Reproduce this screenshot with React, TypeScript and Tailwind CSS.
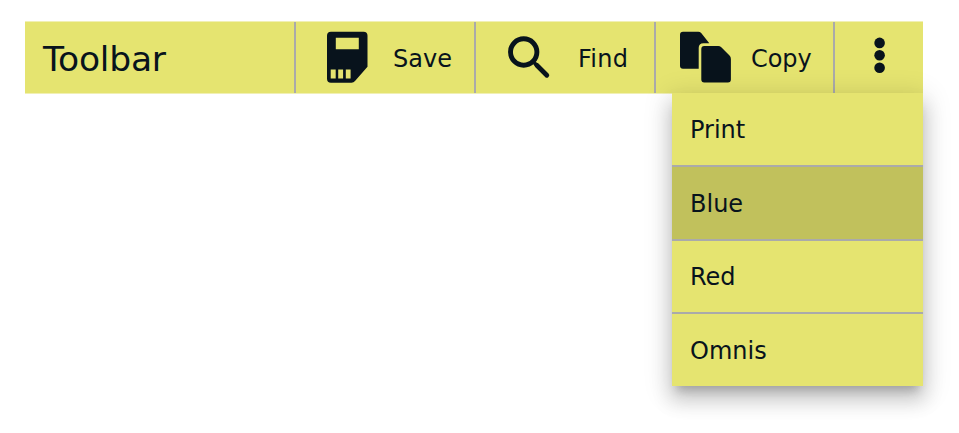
import type { ReactNode } from 'react';

const ink = '#08131c';

function SaveIcon() {
  return (
    <svg className="ml-[30px] h-[54px] w-[44px] shrink-0" viewBox="326 30.5 44 54" fill={ink}>
      <path
        fillRule="evenodd"
        d="M331 31.2H363.5a4 4 0 0 1 4 4V66.2L355 80.6Q353.6 82.2 351.5 82.2H331a4 4 0 0 1-4-4V35.2a4 4 0 0 1 4-4ZM335.8 37.3V48.8H358.8V37.3ZM330.7 69V78H335.7V69ZM338.2 69V78H343.1V69ZM345.8 69V78H350.6V69Z"
      />
    </svg>
  );
}

function FindIcon() {
  return (
    <svg className="ml-[30px] h-[54px] w-[46px] shrink-0" viewBox="506 30.5 46 54" fill="none" stroke={ink}>
      <circle cx="523.7" cy="51.5" r="13.2" strokeWidth="4.9" />
      <path d="M533 61L537 65" strokeWidth="3.5" />
      <path d="M536.8 64.8L546.8 74.8" strokeWidth="4.8" strokeLinecap="round" />
    </svg>
  );
}

function CopyIcon() {
  return (
    <svg className="ml-[22px] h-[54px] w-[56px] shrink-0" viewBox="678 30.5 56 54" fill={ink}>
      <path d="M683 31.3H698.2Q700 31.3 701.2 32.6L709.3 42.7H703.5Q698.7 42.7 698.7 47.5V68.2H683a3 3 0 0 1-3-3V34.3a3 3 0 0 1 3-3Z" />
      <path d="M704.3 45.5H718.2Q720 45.5 721.3 46.8L729.5 55Q730.9 56.4 730.9 58.4V79.1a3 3 0 0 1-3 3H704.3a3 3 0 0 1-3-3V48.5a3 3 0 0 1 3-3Z" />
    </svg>
  );
}

function ToolButton({ icon, width = 'w-[180px]', children }: { icon: ReactNode; width?: string; children: ReactNode }) {
  return (
    <button className={`flex shrink-0 items-center border-r-2 border-[#aaaaaa] text-left text-[24px] ${width}`}>
      {icon}
      {children}
    </button>
  );
}

const items = [
  { label: 'Print', style: 'h-[74px] border-b-2 pt-[2px]' },
  { label: 'Blue', style: 'h-[74px] border-b-2 bg-[#c1c15c] pt-[2px]' },
  { label: 'Red', style: 'h-[73px] border-b-2 pt-[1px]' },
  { label: 'Omnis', style: 'h-[72px] pt-[1px]' },
];

export default function App() {
  return (
    <div className="h-[433px] w-[959px] overflow-hidden bg-white pt-[21px] pl-[25px] font-['DejaVu_Sans','Verdana',sans-serif] text-[#08131c]">
      <div className="flex h-[73px] w-[898px] border-y border-[#f1f0b4] bg-[#e5e470]">
        <div className="flex w-[271px] shrink-0 items-center border-r-2 border-[#aaaaaa] pt-[4px] pl-[18px] text-[34.5px]">
          <span className="tracking-[-0.2px]">Toolbar</span>
        </div>
        <ToolButton icon={<SaveIcon />}>
          <span className="ml-[23px] pt-[3px]">Save</span>
        </ToolButton>
        <ToolButton icon={<FindIcon />}>
          <span className="ml-[26px] pt-[3px] tracking-[0.3px]">Find</span>
        </ToolButton>
        <ToolButton icon={<CopyIcon />} width="w-[179px]">
          <span className="ml-[17px] pt-[3px] tracking-[-0.1px]">Copy</span>
        </ToolButton>
        <button className="flex flex-1 items-center pl-[37px]">
          <svg className="h-[54px] w-[16px]" viewBox="872 30.5 16 54" fill={ink}>
            <circle cx="879.6" cy="42.4" r="5.3" />
            <circle cx="879.6" cy="54.8" r="5.3" />
            <circle cx="879.6" cy="67.3" r="5.3" />
          </svg>
        </button>
      </div>
      <div className="relative -mt-px ml-[647px] w-[251px] bg-[#e5e470] text-[24px] shadow-[0_9px_9px_-5px_rgba(0,0,0,0.2),0_14px_18px_2px_rgba(0,0,0,0.14),0_5px_25px_4px_rgba(0,0,0,0.12)]">
        {items.map(({ label, style }) => (
          <div key={label} className={`flex items-center border-[#aaaaaa] pl-[18px] ${style}`}>
            {label}
          </div>
        ))}
      </div>
    </div>
  );
}
